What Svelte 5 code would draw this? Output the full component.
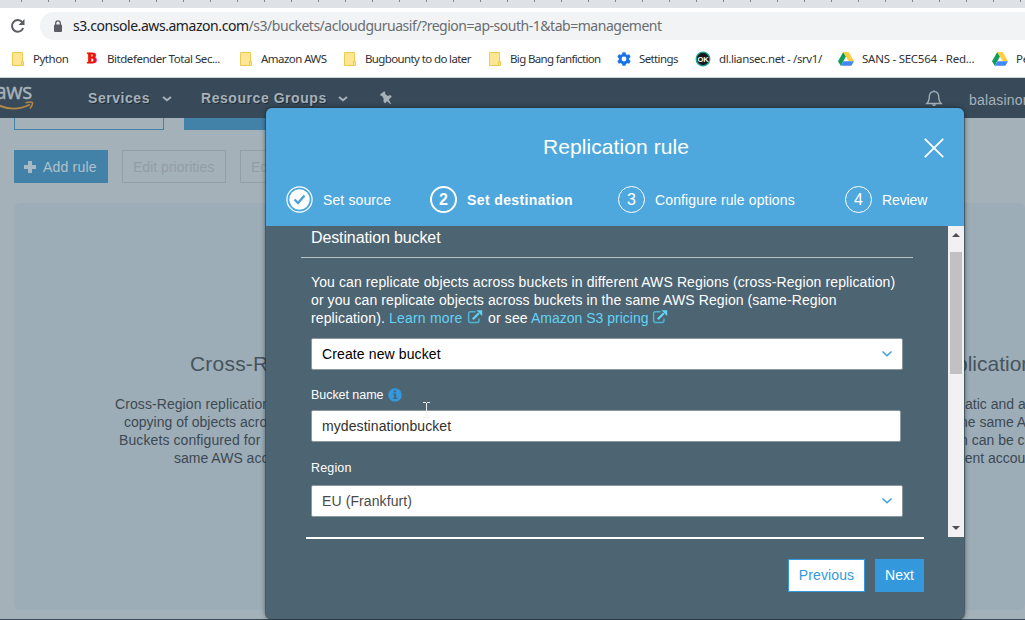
<script>
  const ticks = Array.from({ length: 38 }, (_, i) => i);
  const bookmarks = [
    { icon: 'folder', label: 'Python', w: 76, ls: -0.48 },
    { icon: 'bit', label: 'Bitdefender Total Sec...', w: 152, ls: -0.45 },
    { icon: 'folder', label: 'Amazon AWS', w: 104, ls: -0.54 },
    { icon: 'folder', label: 'Bugbounty to do later', w: 145, ls: -0.62 },
    { icon: 'folder', label: 'Big Bang fanfiction', w: 130, ls: -0.64 },
    { icon: 'gear', label: 'Settings', w: 79, ls: -0.62 },
    { icon: 'ok', label: 'dl.liansec.net - /srv1/', w: 143, ls: -0.39 },
    { icon: 'drive', label: 'SANS - SEC564 - Red...', w: 154, ls: -0.25 },
    { icon: 'drive', label: 'Pe', w: 60, ls: -0.3 }
  ];
  const steps = [
    { n: 1, label: 'Set source', state: 'done' },
    { n: 2, label: 'Set destination', state: 'current' },
    { n: 3, label: 'Configure rule options', state: 'todo' },
    { n: 4, label: 'Review', state: 'todo' }
  ];
</script>

{#snippet external()}
  <svg class="ext" width="16" height="14" viewBox="0 0 16 14">
    <path d="M8.500 1.800H3.400Q1.600 1.800 1.600 3.600V10.600Q1.600 12.400 3.400 12.400H10.200Q12 12.400 12 10.600V8.500" fill="none" stroke="#4fb3d3" stroke-width="1.500" />
    <path d="M5.800 9.200 11.800 3.200" stroke="#62d3f5" stroke-width="2.300" />
    <path d="M9.300 0.200H15.200V6.100L13.300 4.200 11.200 2.100Z" fill="#62d3f5" />
  </svg>
{/snippet}

{#snippet chevron(color, w)}
  <svg width="12" height="8" viewBox="0 0 12 8"><path d="M1.500 1.500 6 5.700 10.500 1.500" fill="none" stroke={color} stroke-width={w} /></svg>
{/snippet}

{#snippet navchevron()}
  <svg class="navchev" width="12" height="8" viewBox="0 0 12 8"><path d="M2 2 6 5.300 10 2" fill="none" stroke="#a6b1b9" stroke-width="2" /></svg>
{/snippet}

<div class="screen">
  <div class="tabs">
    {#each ticks as t (t)}<i></i>{/each}
  </div>
  <div class="address">
    <svg class="reload" width="16" height="16" viewBox="0 0 16 16">
      <path d="M13.200 10A5.800 5.800 0 1 1 12.300 4.200" fill="none" stroke="#5a5d61" stroke-width="2" />
      <path d="M14.500 1V7H8.500Z" fill="#5a5d61" />
    </svg>
    <div class="omnibox">
      <svg width="10" height="13" viewBox="0 0 10 13">
        <rect x="1" y="4.500" width="8" height="7.500" rx="1" fill="#5a5d61" />
        <path d="M2.700 5V3.200a2.300 2.300 0 0 1 4.600 0V5" fill="none" stroke="#5a5d61" stroke-width="1.300" />
      </svg>
      <span class="url"><b>s3.console.aws.amazon.com</b><span>/s3/buckets/acloudguruasif/?region=ap-south-1&amp;tab=management</span></span>
    </div>
  </div>
  <div class="bookmarks">
    {#each bookmarks as b}
      <div class="bm {b.icon}" style="width:{b.w}px">
        {#if b.icon === 'folder'}
          <svg width="16" height="16" viewBox="0 0 16 16"><path d="M3.500 1.500h10v13h-10z" fill="#ffe694" stroke="#ecc94f" /><path d="M12.500 10.500h2v4h-2z" fill="#ffe694" stroke="#ecc94f" /></svg>
        {:else if b.icon === 'bit'}
          <span class="b">B</span>
        {:else if b.icon === 'gear'}
          <svg width="16" height="16" viewBox="0 0 16 16">
            <g fill="#1a73e8"><circle cx="8" cy="8" r="5.200" />
              {#each [0, 60, 120, 180, 240, 300] as a}<path d="M5.900 4 6.500 1.200H9.500L10.100 4Z" transform="rotate({a} 8 8)" />{/each}
            </g><circle cx="8" cy="8" r="2.400" fill="#fff" />
          </svg>
        {:else if b.icon === 'ok'}
          <svg width="16" height="16" viewBox="0 0 16 16"><circle cx="8" cy="8" r="6.800" fill="#151719" stroke="#1ba393" stroke-width="1.300" /><text x="8" y="10.700" text-anchor="middle" font-family="Liberation Sans, sans-serif" font-size="7.500" font-weight="700" fill="#fff">OK</text></svg>
        {:else}
          <svg width="16" height="16" viewBox="0 0 16 16"><path d="M5.300 1 0 10.300 2.700 14.700 8 5.600Z" fill="#0f9d58" /><path d="M5.300 1H10.700L16 10.300H10.700Z" fill="#ffcd40" /><path d="M5.400 10.300H16L13.300 14.700H2.700Z" fill="#4285f4" /></svg>
        {/if}
        <span style="letter-spacing:{b.ls}px">{b.label}</span>
      </div>
    {/each}
  </div>

  <nav>
    <div class="logo">
      <span>aws</span>
      <svg width="42" height="11" viewBox="0 0 42 11"><path d="M0 3Q17 12 34 3.500" fill="none" stroke="#b08748" stroke-width="1.900" /><path d="M29.500 1.800Q35 0.300 36.500 1.600Q37 3.500 34 7.500" fill="none" stroke="#b08748" stroke-width="1.500" /></svg>
    </div>
    <span class="item services">Services</span>{@render navchevron()}
    <span class="item groups">Resource Groups</span>{@render navchevron()}
    <svg class="pin" width="14" height="14" viewBox="0 0 14 14"><path d="M1 3.500 5.200 0.300 6.400 1.600 6 2.700 8.600 5 11.300 4.100 12.800 5.800 9.800 8.400 12 12.800 11.600 13.300 8 10.200 6 12.400 4.400 10.600 4.700 7.800 2.900 4.800 1.800 4.900Z" fill="#a6b1b9" /></svg>
    <svg class="bell" width="18" height="18" viewBox="0 0 18 18"><path d="M9 1.200V2.500M1.800 14.500Q4.300 12.400 4.300 7.300Q4.800 2.600 9 2.600Q13.200 2.600 13.700 7.300Q13.700 12.400 16.200 14.500Z" fill="none" stroke="#a6b1b9" stroke-width="1.300" /><path d="M6.800 15.300H11.200Q10.700 17.300 9 17.300T6.800 15.300Z" fill="#a6b1b9" /></svg>
    <span class="user">balasinor</span>
  </nav>

  <main>
    <div class="row1"><div class="ghost"></div><div class="solid"></div></div>
    <div class="row2">
      <div class="btn add"><svg width="14" height="14" viewBox="0 0 14 14"><path d="M5 1h4v4h4v4H9v4H5V9H1V5h4z" fill="#a9bac4" /></svg><span>Add rule</span></div>
      <div class="btn off">Edit priorities</div>
      <div class="btn off">Edit</div>
    </div>
    <div class="panel">
      <div class="left">
        <h2>Cross-Re</h2>
        <p class="l1">Cross-Region replication</p>
        <p class="l2">copying of objects acros</p>
        <p class="l3">Buckets configured for</p>
        <p class="l4">same AWS acco</p>
      </div>
      <div class="right">
        <h2>plication</h2>
        <p class="r1">atic and as</p>
        <p class="r2">ne same AW</p>
        <p class="r3">n can be co</p>
        <p class="r4">rent accoun</p>
      </div>
    </div>
  </main>

  <section class="modal">
    <header>
      <h1>Replication rule</h1>
      <svg class="close" width="22" height="22" viewBox="0 0 22 22"><path d="M1.800 1.800 20.200 20.200M20.200 1.800 1.800 20.200" stroke="#fff" stroke-width="1.800" /></svg>
      <div class="steps">
        {#each steps as s (s.n)}
          <div class="step {s.state}">
            <span class="num">
              {#if s.state === 'done'}
                <svg width="27" height="27" viewBox="0 0 27 27"><circle cx="13.500" cy="13.500" r="12.600" fill="none" stroke="#fff" stroke-width="1.200" /><circle cx="13.500" cy="13.500" r="10.200" fill="#fff" /><path d="M8.500 13.500 12 17 18.500 9.500" fill="none" stroke="#4aa3d8" stroke-width="2.400" /></svg>
              {:else}{s.n}{/if}
            </span>
            <span class="lab s{s.n}">{s.label}</span>
          </div>
        {/each}
      </div>
    </header>
    <div class="scroll">
      <div class="form">
        <h3>Destination bucket</h3>
        <div class="desc">
          <div class="d1">You can replicate objects across buckets in different AWS Regions (cross-Region replication)</div>
          <div class="d2">or you can replicate objects across buckets in the same AWS Region (same-Region</div>
          <div class="d3"><span class="t1">replication).</span><a class="t2">Learn more</a>{@render external()}<span class="t3">or see</span><a class="t4">Amazon S3 pricing</a>{@render external()}</div>
        </div>
        <div class="field"><span class="black">Create new bucket</span>{@render chevron('#3f9fd8', 1.5)}</div>
        <div class="label">Bucket name
          <svg width="14" height="14" viewBox="0 0 14 14"><circle cx="7" cy="7" r="6.800" fill="#3399dc" /><path d="M5.800 2.500h2.300v1.800H5.800zM5 5.500h3.200v4.200h1V11H5V9.700h1V6.800H5z" fill="#4d6472" /></svg>
        </div>
        <div class="field text"><span class="dark">mydestinationbucket</span></div>
        <div class="label second">Region</div>
        <div class="field"><span class="eu">EU (Frankfurt)</span>{@render chevron('#3f9fd8', 1.5)}</div>
        <div class="rule"></div>
      </div>
      <div class="bar">
        <svg width="16" height="16" viewBox="0 0 16 16"><path d="M4 11h8L8 7z" fill="#505050" /></svg>
        <div class="thumb"></div>
        <svg width="16" height="16" viewBox="0 0 16 16"><path d="M4 5h8L8 9z" fill="#505050" /></svg>
      </div>
    </div>
    <footer>
      <button class="prev">Previous</button><button class="next">Next</button>
    </footer>
  </section>
  <svg class="cursor" width="7" height="16" viewBox="0 0 7 16"><path d="M0 .5H3M4 .5H7M3.500 1V15M0 15.500H3M4 15.500H7" stroke="#eee" fill="none" /></svg>
</div>

<style>
  :global(body) { margin: 0; overflow: hidden; }
  * { box-sizing: border-box; }
  h1, h2, h3, p { margin: 0; font-weight: 400; }
  svg { flex: none; display: block; }
  .screen { position: relative; width: 1025px; height: 620px; overflow: hidden; display: flex; flex-direction: column; background: #a5b1b8; font: 14px/18px "Liberation Sans", Arial, sans-serif; white-space: nowrap; }
  .tabs { height: 8px; flex: none; background: #dee1e6; display: flex; gap: 26px; padding-left: 21px; }
  .tabs i { width: 1px; height: 2px; flex: none; background: #83878b; }
  .address { height: 33px; flex: none; background: #fff; display: flex; align-items: center; padding-left: 10px; }
  .reload { margin-right: 14px; margin-top: 3px; }
  .omnibox { flex: 1; height: 28px; margin-top: 3px; background: #f1f3f4; border-radius: 14px 0 0 14px; display: flex; align-items: center; padding-left: 13px; font: 14px/20px "Noto Sans", sans-serif; color: #6a6d70; }
  .omnibox svg { margin-right: 10px; }
  .url { letter-spacing: -0.475px; }
  .url b { font-weight: 400; color: #202124; letter-spacing: -0.44px; }
  .bookmarks { height: 37px; flex: none; background: #fff; border-bottom: 1px solid #cdd1d4; display: flex; padding-left: 9px; font: 11.5px/16px "Noto Sans", sans-serif; color: #303336; }
  .bm { flex: none; display: flex; align-items: center; gap: 8px; }
  .gear { gap: 7px; }
  .b { width: 14px; text-align: center; font: bold 14px "Liberation Serif", serif; -webkit-text-stroke: 1px #ea1010; color: #ea1010; }
  nav { height: 40px; flex: none; background: #384a59; display: flex; align-items: center; color: #a6b1b9; overflow: hidden; }
  .logo { width: 88px; align-self: stretch; flex: none; }
  .logo span { display: block; margin-left: -5px; font: 21px/22px "Open Sans", sans-serif; letter-spacing: -.3px; height: 22px; margin-top: 2px; -webkit-text-stroke: .4px #a6b1b9; }
  .logo svg { margin-left: -4px; margin-top: -1px; }
  .navchev { margin-top: 2px; }
  .item { font-weight: 700; letter-spacing: .55px; text-shadow: 1px 1px #202d38; flex: none; }
  .services { margin-right: 11px; }
  .groups { margin: 0 10px 0 28px; }
  .pin { margin-left: 30px; }
  .bell { margin-left: auto; margin-right: 26px; }
  .user { width: 56px; flex: none; letter-spacing: .2px; margin-top: 3px; }
  main { flex: 1; border-bottom: 1px solid #384a59; padding-left: 14px; overflow: hidden; }
  .row1 { display: flex; gap: 20px; }
  .ghost { width: 150px; height: 12px; border: 1px solid #4382a8; border-top: 0; }
  .solid { width: 150px; height: 12px; background: #4382a8; }
  .row2 { display: flex; gap: 14px; margin-top: 20px; }
  .btn { height: 33px; display: flex; align-items: center; }
  .add { width: 94px; background: #4382a8; padding-left: 9px; gap: 6px; color: #b1c1cb; letter-spacing: .2px; }
  .off { width: 104px; border: 1px solid #929fa7; color: #919ea6; padding-left: 10px; letter-spacing: .02px; }
  .panel { margin-top: 20px; height: 407px; border-radius: 6px; background: #9dadb7; display: flex; color: #3c4953; }
  .left { width: 951px; flex: none; }
  .panel h2 { font-size: 21px; line-height: 26px; padding-top: 148px; margin-bottom: 18px; color: #46545e; }
  .left h2 { margin-left: 176px; letter-spacing: .2px; }
  .right h2 { margin-left: -9px; }
  .right { width: 60px; }
  .l1 { margin-left: 101px; letter-spacing: .08px; } .l2 { margin-left: 110px; } .l3 { margin-left: 105px; letter-spacing: .1px; } .l4 { margin-left: 160px; }
  .r2, .r3, .r4 { margin-left: -5px; }
  .modal { position: absolute; left: 266px; top: 108px; width: 698px; height: 511px; border-radius: 6px; background: #4d6472; box-shadow: 0 0 0 1px #26353f80, 0 0 5px #17232bcc; overflow: hidden; color: #fff; }
  header { height: 118px; background: #4ea8dd; position: relative; }
  h1 { padding-top: 26px; padding-left: 2px; font-size: 21px; line-height: 26px; text-align: center; letter-spacing: .07px; }
  .close { position: absolute; right: 19px; top: 29px; }
  .steps { margin-top: 26px; padding-left: 20px; display: grid; grid-template-columns: 144px 188px 227px 100px; }
  .step { display: flex; align-items: center; gap: 10px; }
  .num { width: 27px; height: 27px; border: 1px solid #fff; border-radius: 50%; font-size: 16px; display: flex; align-items: center; justify-content: center; }
  .done .num { border: 0; }
  .current { font-weight: 700; }
  .current .num { border-width: 2px; }
  .s1 { letter-spacing: .12px; } .s2 { letter-spacing: .38px; } .s3 { letter-spacing: .13px; } .s4 { letter-spacing: -.1px; }
  .scroll { height: 312px; display: flex; justify-content: space-between; }
  .form { width: 658px; padding: 0 0 0 35px; }
  .rule { height: 2px; margin: 20px 0 0 5px; background: #fff; }
  h3 { height: 32px; width: 612px; border-bottom: 1px solid #b9c2c0; padding-left: 10px; font-size: 16px; line-height: 23px; letter-spacing: -.12px; }
  .desc { padding: 15px 0 0 10px; height: 80px; }
  .d1 { letter-spacing: .105px; } .d2 { letter-spacing: .09px; }
  .d3 { display: flex; }
  a { color: #62d3f5; }
  .t1 { width: 78px; letter-spacing: .12px; } .t2 { width: 78px; letter-spacing: .2px; } .t3 { margin-left: 5px; width: 43px; letter-spacing: .15px; } .t4 { width: 121px; }
  .ext { margin-top: 1px; }
  .field { width: 592px; height: 32px; margin-left: 10px; background: #fff; border: 1px solid #8b989c; border-radius: 2px; color: #4a4a4a; display: flex; align-items: center; justify-content: space-between; padding: 0 9px 0 10px; }
  .text { width: 590px; }
  .black { color: #000; letter-spacing: .12px; } .dark { color: #303030; letter-spacing: .08px; } .eu { letter-spacing: .1px; }
  .label { height: 40px; padding: 16px 0 0 10px; font-size: 12.5px; line-height: 18px; display: flex; gap: 5px; letter-spacing: -.05px; }
  .label svg { margin-top: 2px; }
  .second { height: 43px; padding-top: 17px; letter-spacing: .15px; }
  .bar { width: 16px; background: #f1f1f1; height: 311px; display: flex; flex-direction: column; }
  .thumb { margin: 10px 2px auto; height: 122px; background: #c1c1c1; }
  footer { padding: 21px 40px 0; display: flex; justify-content: flex-end; gap: 10px; }
  button { height: 33px; border: 1px solid #3399dc; font: 14px "Liberation Sans", Arial, sans-serif; padding: 0 0 2px; }
  .prev { width: 77px; background: #fff; color: #3399dc; letter-spacing: .1px; }
  .next { width: 49px; background: #3399dc; color: #fff; }
  .cursor { position: absolute; left: 423px; top: 402px; }
</style>
